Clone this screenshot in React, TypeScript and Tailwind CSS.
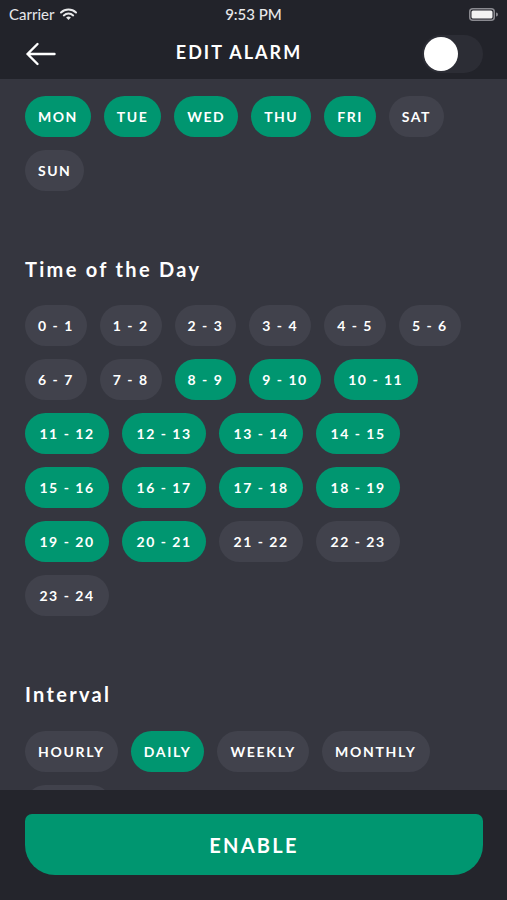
import React from "react";

type Item = { label: string; on: boolean };

const dayRows: Item[][] = [
  [
    { label: "MON", on: true },
    { label: "TUE", on: true },
    { label: "WED", on: true },
    { label: "THU", on: true },
    { label: "FRI", on: true },
    { label: "SAT", on: false },
  ],
  [{ label: "SUN", on: false }],
];

const activeHours = [8, 9, 10, 11, 12, 13, 14, 15, 16, 17, 18, 19, 20];
const hour = (i: number): Item => ({ label: `${i} - ${i + 1}`, on: activeHours.includes(i) });
const hourRows: Item[][] = [
  [0, 1, 2, 3, 4, 5],
  [6, 7, 8, 9, 10],
  [11, 12, 13, 14],
  [15, 16, 17, 18],
  [19, 20, 21, 22],
  [23],
].map((r) => r.map(hour));

const intervalRows: Item[][] = [
  [
    { label: "HOURLY", on: false },
    { label: "DAILY", on: true },
    { label: "WEEKLY", on: false },
    { label: "MONTHLY", on: false },
  ],
  [{ label: "YEARLY", on: false }],
];

type Kind = "day" | "hour" | "interval";

function Chip({ label, on, kind }: Item & { kind: Kind }) {
  let spacing = "px-[13px] tracking-[1.5px]";
  if (kind === "hour") {
    // double-digit ranges sit in slightly wider pills
    spacing = label.length >= 7 ? "px-[14.5px] tracking-[1.5px]" : "px-[13px] tracking-[1.5px]";
  } else if (kind === "interval") {
    spacing = "px-[13px] tracking-[1.7px]";
  }
  return (
    <div
      className={`h-[41px] shrink-0 flex items-center rounded-full text-[14px] font-bold text-white whitespace-nowrap ${spacing} ${
        on ? "bg-[#009670]" : "bg-[#41424c]"
      }`}
    >
      {label}
    </div>
  );
}

function ChipRows({ rows, kind }: { rows: Item[][]; kind: Kind }) {
  return (
    <div className="flex flex-col gap-[13px]">
      {rows.map((row, i) => (
        <div key={i} className="flex gap-[13px]">
          {row.map((it) => (
            <Chip key={it.label} {...it} kind={kind} />
          ))}
        </div>
      ))}
    </div>
  );
}

function StatusBar() {
  return (
    <div className="h-[28px] flex items-center justify-between px-[9px] text-[15px] text-[#e8e8ea]">
      <div className="flex items-center gap-[6px]">
        <span>Carrier</span>
        <svg width="17" height="13" viewBox="0 0 17 13" fill="none">
          <path d="M1 4.5a11 11 0 0 1 15 0" stroke="#e8e8ea" strokeWidth="2" strokeLinecap="round" />
          <path d="M3.8 7.4a7 7 0 0 1 9.4 0" stroke="#e8e8ea" strokeWidth="2" strokeLinecap="round" />
          <path d="M8.5 12l-2.4-2.4a3.4 3.4 0 0 1 4.8 0z" fill="#e8e8ea" />
        </svg>
      </div>
      <span className="absolute left-1/2 -translate-x-1/2 font-medium">9:53 PM</span>
      <svg width="29" height="13" viewBox="0 0 29 13" fill="none">
        <rect x="0.75" y="0.75" width="24.5" height="11.5" rx="3" stroke="#8a8a90" strokeWidth="1.5" />
        <rect x="2.5" y="2.5" width="21" height="8" rx="1.5" fill="#f2f2f2" />
        <path d="M27 4.5v4a2 2 0 0 0 0-4z" fill="#8a8a90" />
      </svg>
    </div>
  );
}

export default function App() {
  return (
    <div
      className="relative w-[507px] h-[900px] flex flex-col bg-[#35363f] overflow-hidden"
      style={{ fontFamily: "Lato, 'Noto Sans', sans-serif" }}
    >
      {/* top bar */}
      <div className="bg-[#22232a] shrink-0">
        <StatusBar />
        <div className="h-[51px] flex items-center justify-between pl-[25px] pr-[24px]">
          <svg width="31" height="24" viewBox="0 0 31 24" fill="none">
            <path d="M29.5 12H2.5M12.5 2L2.5 12l10 10" stroke="#fff" strokeWidth="2.4" strokeLinecap="round" strokeLinejoin="round" />
          </svg>
          <span className="text-white text-[18px] font-bold tracking-[2px] -mt-[2px]">EDIT ALARM</span>
          <div className="w-[61px] h-[38px] rounded-full bg-[#2c2d35] flex items-center pl-[2px]">
            <div className="w-[34px] h-[34px] rounded-full bg-white" />
          </div>
        </div>
      </div>

      {/* scrolling content */}
      <div className="flex-1 overflow-hidden px-[25px] pt-[17px]">
        <ChipRows rows={dayRows} kind="day" />

        <h2 className="mt-[66px] text-white text-[20px] font-bold tracking-[2.3px] leading-[24px]">
          Time of the Day
        </h2>
        <div className="mt-[24px]">
          <ChipRows rows={hourRows} kind="hour" />
        </div>

        <h2 className="mt-[66px] text-white text-[20px] font-bold tracking-[2.3px] leading-[24px]">
          Interval
        </h2>
        <div className="mt-[25px]">
          <ChipRows rows={intervalRows} kind="interval" />
        </div>
      </div>

      {/* bottom bar */}
      <div className="shrink-0 h-[110px] bg-[#24252c] px-[25px] pt-[24px]">
        <button className="w-[458px] h-[61px] bg-[#009670] rounded-t-[7px] rounded-b-[30px] text-white text-[20px] font-bold tracking-[2.3px]">
          ENABLE
        </button>
      </div>
    </div>
  );
}
